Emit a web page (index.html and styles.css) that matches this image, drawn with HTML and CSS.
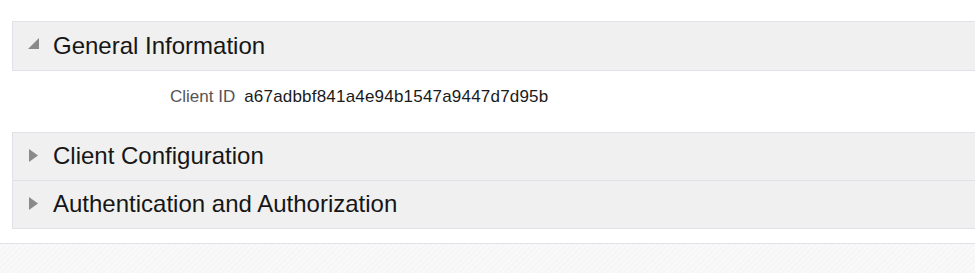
FILE: index.html
```html
<!DOCTYPE html>
<html>
<head>
<meta charset="utf-8">
<link rel="stylesheet" href="styles.css">
</head>
<body>
<div class="page">
  <div class="panel">
    <div class="section-header expanded">
      <span class="toggle">
        <svg width="12" height="12" viewBox="0 0 12 12"><polygon points="11,0 11,11 0,11" fill="#8a8a8a"/></svg>
      </span>
      <span class="title">General Information</span>
    </div>
  </div>
  <div class="section-body">
    <div class="field">
      <span class="label">Client ID</span>
      <span class="value">a67adbbf841a4e94b1547a9447d7d95b</span>
    </div>
  </div>
  <div class="panel group">
    <div class="section-header">
      <span class="toggle">
        <svg width="10" height="13" viewBox="0 0 10 13"><polygon points="0,0 9,6.5 0,13" fill="#8a8a8a"/></svg>
      </span>
      <span class="title">Client Configuration</span>
    </div>
    <div class="section-header">
      <span class="toggle">
        <svg width="10" height="13" viewBox="0 0 10 13"><polygon points="0,0 9,6.5 0,13" fill="#8a8a8a"/></svg>
      </span>
      <span class="title">Authentication and Authorization</span>
    </div>
  </div>
</div>
<div class="footer"></div>
</body>
</html>
```
FILE: styles.css
```css
html, body {
  margin: 0;
  padding: 0;
  background: #ffffff;
  font-family: "Liberation Sans", Arial, sans-serif;
  overflow: hidden;
}
.page {
  padding: 21px 0 0 12px;
  margin-right: -4px;
}
.panel {
  border: 1px solid #dfe3e7;
  background: #f0f0f0;
}
.section-header {
  height: 48px;
  display: flex;
  align-items: center;
  color: #161616;
}
.group .section-header {
  height: 47px;
  box-sizing: border-box;
  padding-bottom: 2px;
}
.group .section-header + .section-header {
  height: 48px;
  border-top: 1px solid #dfe3e7;
}
.toggle {
  width: 40px;
  display: flex;
  justify-content: flex-start;
  padding-left: 16px;
  box-sizing: border-box;
}
.expanded .toggle {
  padding-left: 15px;
}
.expanded .toggle svg {
  margin-top: -4px;
}
.title {
  font-size: 24px;
  line-height: 1;
}
.section-body {
  height: 61px;
  box-sizing: border-box;
  padding-top: 16px;
}
.field {
  display: flex;
  align-items: baseline;
  gap: 9px;
  padding-left: 158px;
  font-size: 17px;
}
.label {
  color: #555555;
}
.value {
  color: #1a1a1a;
  letter-spacing: 0.2px;
}
.footer {
  margin-top: 14px;
  height: 40px;
  border-top: 1px solid #dfe3e7;
  background: repeating-linear-gradient(135deg, #f6f6f6 0px, #f6f6f6 2px, #f9f9f9 2px, #f9f9f9 4px);
}
```
